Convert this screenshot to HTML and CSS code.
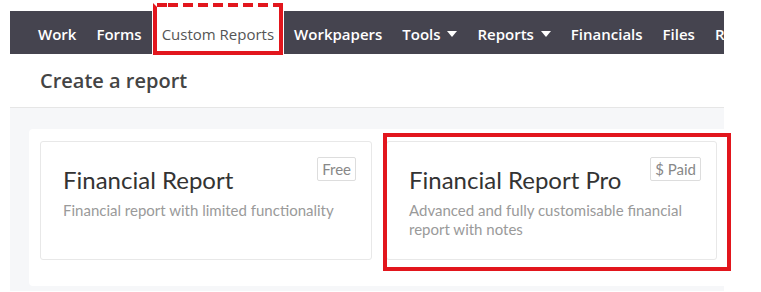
FILE: index.html
```html
<!DOCTYPE html>
<html lang="en">
<head>
    <meta charset="UTF-8">
    <title>Create a report</title>
    <link rel="stylesheet" href="styles.css">
</head>
<body>

    <div class="page">
        <div class="navbar">
            <div class="nav-item">Work</div>
            <div class="nav-item">Forms</div>
            <div class="nav-item active">Custom Reports<span class="mark mark-nav"></span></div>
            <div class="nav-item">Workpapers</div>
            <div class="nav-item">Tools <span class="caret"></span></div>
            <div class="nav-item">Reports <span class="caret"></span></div>
            <div class="nav-item">Financials</div>
            <div class="nav-item">Files</div>
            <div class="nav-item">Resources</div>
        </div>

        <div class="page-header">Create a report</div>

        <div class="content">
            <div class="panel">
                <div class="report-card">
                    <span class="badge">Free</span>
                    <div class="report-title">Financial Report</div>
                    <div class="report-desc">Financial report with limited functionality</div>
                </div>
                <div class="report-card">
                    <span class="badge">$ Paid</span>
                    <div class="report-title">Financial Report Pro</div>
                    <div class="report-desc">Advanced and fully customisable financial report with notes</div>
                    <span class="mark mark-card"></span>
                </div>
            </div>
        </div>
    </div>

</body>
</html>
```

FILE: styles.css
```css
body {
    margin: 0;
    font-family: "Open Sans", Arial, sans-serif;
    background-color: #fff;
}
.page {
    width: 714px;
    margin-left: 10px;
    padding-top: 11px;
}
.navbar {
    display: flex;
    height: 43px;
    padding-left: 18px;
    background-color: #45444f;
    white-space: nowrap;
    /* cut the last item at the right edge, but let the red mark stick out on top */
    clip-path: inset(-12px 0 -12px -12px);
}
.nav-item {
    position: relative;
    padding: 3px 10px 0;
    color: #fff;
    font-size: 15px;
    font-weight: 600;
    line-height: 40px;
}
.nav-item.active {
    background-color: #fff;
    color: #555;
    font-weight: 400;
}
.caret {
    display: inline-block;
    width: 0;
    height: 0;
    margin-left: 3px;
    vertical-align: 3px;
    border-left: 5px solid transparent;
    border-right: 5px solid transparent;
    border-top: 6px solid #fff;
}
/* red annotation boxes */
.mark {
    position: absolute;
    border: 4px solid #e2161d;
    pointer-events: none;
}
.mark-nav {
    top: -8px;
    bottom: -1px;
    left: 1px;
    right: 1px;
    border-top-color: transparent;
    background: linear-gradient(90deg, #e2161d 0 14px, transparent 14px),
        repeating-linear-gradient(90deg, #e2161d 0 10px, #fff 10px 15px);
    background-size: 100% 4px;
    background-repeat: no-repeat;
    background-origin: border-box;
}
.mark-card {
    top: -9px;
    bottom: -12px;
    left: -4px;
    right: -15px;
}
.page-header {
    height: 53px;
    padding-left: 30px;
    font-size: 20px;
    font-weight: 600;
    line-height: 53px;
    color: #444;
    border-bottom: 1px solid #e6e6e6;
}
.content {
    padding: 21px 0 5px 19px;
    background-color: #f6f7f9;
}
.panel {
    display: grid;
    grid-template-columns: 332px 331px;
    gap: 14px;
    width: 710px;
    padding: 12px 11px 26px;
    background-color: #fff;
    border-radius: 4px;
    font-family: Lato, "Open Sans", sans-serif;
}
.report-card {
    position: relative;
    box-sizing: border-box;
    height: 119px;
    padding: 23px 22px 0;
    border: 1px solid #e8e8e8;
    border-radius: 3px;
}
.report-title {
    font-size: 24px;
    line-height: 29px;
    color: #333;
}
.report-desc {
    margin-top: 7px;
    padding-right: 10px;
    font-size: 15px;
    line-height: 19px;
    color: #9a9a9a;
}
.badge {
    position: absolute;
    top: 15px;
    right: 15px;
    height: 22px;
    padding: 0 4px;
    border: 1px solid #ddd;
    border-radius: 2px;
    font-size: 15px;
    line-height: 22px;
    color: #888;
}
```
